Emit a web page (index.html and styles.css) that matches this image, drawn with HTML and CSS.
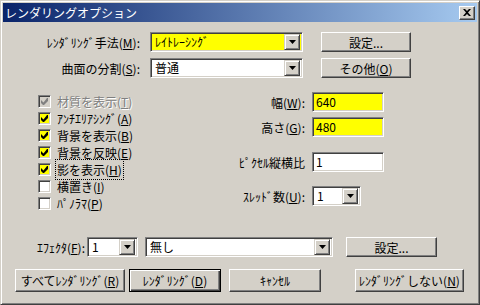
FILE: index.html
```html
<!DOCTYPE html>
<html lang="ja">
<head>
    <meta charset="UTF-8">
    <title>レンダリングオプション</title>
    <link rel="stylesheet" href="styles.css">
</head>
<body>
    <div class="window">
        <div class="titlebar">
            <span class="title">レンダリングオプション</span>
            <div class="close">
                <svg width="8" height="7" viewBox="0 0 8 7"><path d="M0 0h2l2 2 2-2h2L5 3.5 8 7H6L4 5 2 7H0l3-3.5z" fill="#000"/></svg>
            </div>
        </div>

        <div class="content">
            <div class="top-row">
                <span class="lbl-main">ﾚﾝﾀﾞﾘﾝｸﾞ手法(<u>M</u>):</span>
                <div class="combo combo-main yellow">
                    <span class="combo-text">ﾚｲﾄﾚｰｼﾝｸﾞ</span>
                    <span class="drop"><svg width="7" height="4" viewBox="0 0 7 4"><path d="M0 0h7L3.5 4z" fill="#000"/></svg></span>
                </div>
                <div class="btn btn-side">設定...</div>
            </div>
            <div class="top-row">
                <span class="lbl-main">曲面の分割(<u>S</u>):</span>
                <div class="combo combo-main">
                    <span class="combo-text">普通</span>
                    <span class="drop"><svg width="7" height="4" viewBox="0 0 7 4"><path d="M0 0h7L3.5 4z" fill="#000"/></svg></span>
                </div>
                <div class="btn btn-side">その他(<u>O</u>)</div>
            </div>

            <div class="middle">
                <div class="checks">
                    <div class="check disabled">
                        <span class="box"><svg width="7" height="7" viewBox="0 0 7 7"><path d="M6 0h1v3L3 7H2L0 5V2l2.5 2.5z" fill="#808080"/></svg></span>
                        <span>材質を表示(<u>T</u>)</span>
                    </div>
                    <div class="check">
                        <span class="box yellow"><svg width="7" height="7" viewBox="0 0 7 7"><path d="M6 0h1v3L3 7H2L0 5V2l2.5 2.5z" fill="#000"/></svg></span>
                        <span>ｱﾝﾁｴﾘｱｼﾝｸﾞ(<u>A</u>)</span>
                    </div>
                    <div class="check">
                        <span class="box yellow"><svg width="7" height="7" viewBox="0 0 7 7"><path d="M6 0h1v3L3 7H2L0 5V2l2.5 2.5z" fill="#000"/></svg></span>
                        <span>背景を表示(<u>B</u>)</span>
                    </div>
                    <div class="check">
                        <span class="box yellow"><svg width="7" height="7" viewBox="0 0 7 7"><path d="M6 0h1v3L3 7H2L0 5V2l2.5 2.5z" fill="#000"/></svg></span>
                        <span>背景を反映(<u>E</u>)</span>
                    </div>
                    <div class="check">
                        <span class="box yellow"><svg width="7" height="7" viewBox="0 0 7 7"><path d="M6 0h1v3L3 7H2L0 5V2l2.5 2.5z" fill="#000"/></svg></span>
                        <span class="focus">影を表示(<u>H</u>)</span>
                    </div>
                    <div class="check">
                        <span class="box"></span>
                        <span>横置き(<u>I</u>)</span>
                    </div>
                    <div class="check">
                        <span class="box"></span>
                        <span>ﾊﾟﾉﾗﾏ(<u>P</u>)</span>
                    </div>
                </div>

                <div class="fields">
                    <div class="field">
                        <span class="field-lbl">幅(<u>W</u>):</span>
                        <div class="textbox yellow">640</div>
                    </div>
                    <div class="field gap-s">
                        <span class="field-lbl">高さ(<u>G</u>):</span>
                        <div class="textbox yellow">480</div>
                    </div>
                    <div class="field gap-l">
                        <span class="field-lbl">ﾋﾟｸｾﾙ縦横比</span>
                        <div class="textbox">1</div>
                    </div>
                    <div class="field gap-m">
                        <span class="field-lbl">ｽﾚｯﾄﾞ数(<u>U</u>):</span>
                        <div class="combo combo-thread">
                            <span class="combo-text">1</span>
                            <span class="drop"><svg width="7" height="4" viewBox="0 0 7 4"><path d="M0 0h7L3.5 4z" fill="#000"/></svg></span>
                        </div>
                    </div>
                </div>
            </div>

            <div class="effect-row">
                <span class="effect-lbl">ｴﾌｪｸﾀ(<u>F</u>):</span>
                <div class="combo combo-num">
                    <span class="combo-text">1</span>
                    <span class="drop"><svg width="7" height="4" viewBox="0 0 7 4"><path d="M0 0h7L3.5 4z" fill="#000"/></svg></span>
                </div>
                <div class="combo combo-effect">
                    <span class="combo-text">無し</span>
                    <span class="drop"><svg width="7" height="4" viewBox="0 0 7 4"><path d="M0 0h7L3.5 4z" fill="#000"/></svg></span>
                </div>
                <div class="btn btn-effect">設定...</div>
            </div>

            <div class="button-row">
                <div class="btn btn-all">すべてﾚﾝﾀﾞﾘﾝｸﾞ(<u>R</u>)</div>
                <div class="btn btn-default btn-render">ﾚﾝﾀﾞﾘﾝｸﾞ(<u>D</u>)</div>
                <div class="btn btn-cancel">ｷｬﾝｾﾙ</div>
                <div class="btn btn-norender">ﾚﾝﾀﾞﾘﾝｸﾞしない(<u>N</u>)</div>
            </div>
        </div>
    </div>
</body>
</html>
```

FILE: styles.css
```css
* {
    box-sizing: border-box;
}
body {
    margin: 0;
    background: #d4d0c8;
    font-family: "Noto Sans CJK JP", "Noto Sans", sans-serif;
    font-size: 12px;
    color: #000;
}
u {
    text-underline-offset: 1px;
}
.window {
    width: 480px;
    height: 305px;
    padding: 2px;
    background: #d4d0c8;
    border: 1px solid;
    border-color: #d4d0c8 #404040 #404040 #d4d0c8;
    box-shadow: inset 1px 1px #fff, inset -1px -1px #808080;
}
.titlebar {
    height: 19px;
    display: flex;
    align-items: center;
    justify-content: space-between;
    padding: 0 2px 0 2px;
    background: linear-gradient(to right, #0a246a, #a6caf0);
    color: #fff;
}
.title {
    font-size: 12px;
    line-height: 19px;
}
.close {
    width: 16px;
    height: 14px;
    display: flex;
    align-items: center;
    justify-content: center;
    background: #d4d0c8;
    border: 1px solid;
    border-color: #fff #404040 #404040 #fff;
    box-shadow: inset -1px -1px #808080;
}
.content {
    padding-top: 10px;
}

/* top two rows */
.top-row {
    display: flex;
    align-items: center;
    height: 20px;
}
.top-row + .top-row {
    margin-top: 6px;
}
.lbl-main {
    width: 137px;
    text-align: right;
}

/* sunken controls */
.combo, .textbox {
    height: 20px;
    padding: 2px;
    background: #fff;
    border: 1px solid;
    border-color: #808080 #fff #fff #808080;
    box-shadow: inset 1px 1px #404040, inset -1px -1px #d4d0c8;
}
.combo {
    display: flex;
    align-items: center;
}
.combo-text {
    flex: 1;
    padding-left: 2px;
    line-height: 16px;
    white-space: nowrap;
}
.textbox {
    width: 72px;
    padding-left: 3px;
    line-height: 14px;
}
.yellow {
    background: #ffff00;
}
.drop {
    width: 16px;
    height: 16px;
    flex: none;
    display: flex;
    align-items: center;
    justify-content: center;
    background: #d4d0c8;
    border: 1px solid;
    border-color: #d4d0c8 #404040 #404040 #d4d0c8;
    box-shadow: inset 1px 1px #fff, inset -1px -1px #808080;
}
.combo-main {
    width: 153px;
    margin-left: 10px;
}

/* buttons */
.btn {
    display: flex;
    align-items: center;
    justify-content: center;
    height: 20px;
    white-space: nowrap;
    background: #d4d0c8;
    border: 1px solid;
    border-color: #fff #404040 #404040 #fff;
    box-shadow: inset -1px -1px #808080;
}
.btn-default {
    border-color: #000;
    box-shadow: inset 1px 1px #fff, inset -1px -1px #404040, inset -2px -2px #808080;
}
.btn-side {
    width: 90px;
    margin-left: 18px;
}

/* checkboxes + fields */
.middle {
    display: flex;
    margin-top: 14px;
}
.checks {
    width: 195px;
    margin-left: 35px;
    padding-top: 1px;
}
.check {
    display: flex;
    align-items: center;
    height: 17px;
    white-space: nowrap;
}
.box {
    width: 13px;
    height: 13px;
    margin-right: 6px;
    display: flex;
    align-items: center;
    justify-content: center;
    background: #fff;
    border: 1px solid;
    border-color: #808080 #fff #fff #808080;
    box-shadow: inset 1px 1px #404040, inset -1px -1px #d4d0c8;
}
.box.yellow {
    background: #ffff00;
}
.disabled {
    color: #808080;
    text-shadow: 1px 1px #fff;
}
.disabled .box {
    background: #d4d0c8;
}
.focus {
    outline: 1px dotted #000;
    outline-offset: 1px;
}
.field {
    display: flex;
    align-items: center;
    height: 20px;
}
.field-lbl {
    width: 72px;
    margin-right: 7px;
    text-align: right;
    white-space: nowrap;
}
.gap-s {
    margin-top: 5px;
}
.gap-l {
    margin-top: 15px;
}
.gap-m {
    margin-top: 14px;
}
.combo-thread {
    width: 49px;
}

/* effect row */
.effect-row {
    display: flex;
    align-items: center;
    height: 20px;
    margin-top: 25px;
}
.effect-lbl {
    width: 84px;
    padding-right: 2px;
    text-align: right;
}
.combo-num {
    width: 51px;
}
.combo-effect {
    width: 188px;
    margin-left: 7px;
}
.btn-effect {
    width: 91px;
    margin-left: 13px;
}

/* bottom buttons */
.button-row {
    display: flex;
    margin-top: 12px;
}
.button-row .btn {
    height: 23px;
}
.btn-all {
    width: 110px;
    margin-left: 12px;
}
.btn-render {
    width: 92px;
    margin-left: 4px;
}
.btn-cancel {
    width: 92px;
    margin-left: 8px;
}
.btn-norender {
    width: 109px;
    margin-left: 34px;
}
```
